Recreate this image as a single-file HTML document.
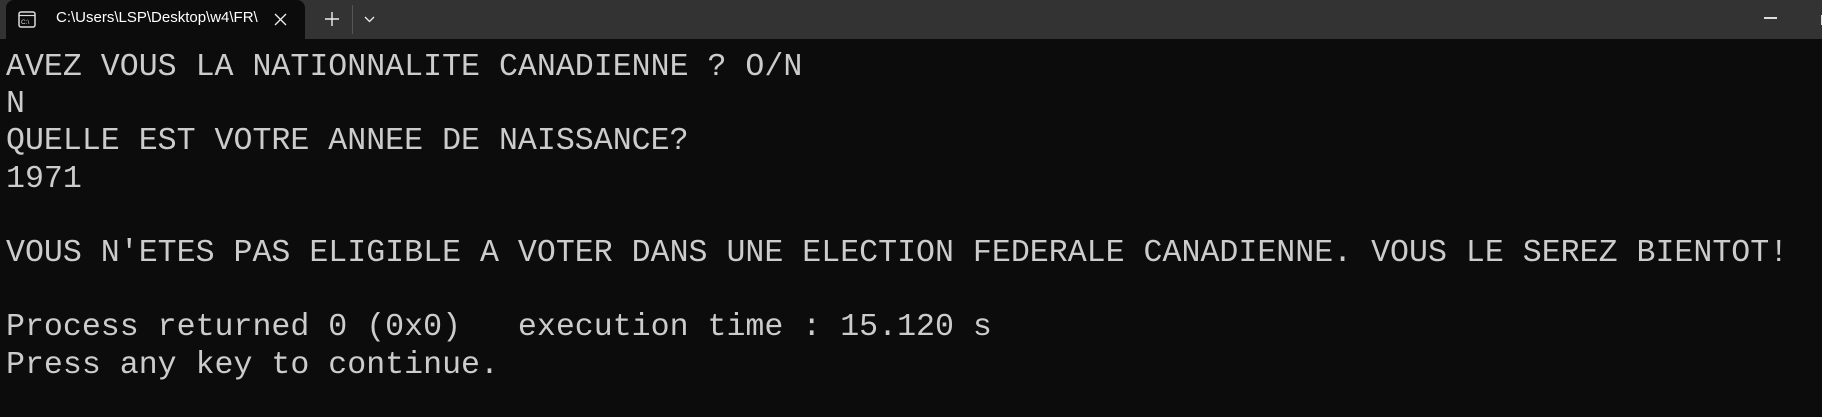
<!DOCTYPE html>
<html><head><meta charset="utf-8"><style>
html,body{margin:0;padding:0;width:1822px;height:417px;overflow:hidden;background:#0c0c0c;}
.bar{position:absolute;left:0;top:0;width:1822px;height:39px;background:#333;}
.tab{position:absolute;left:6px;top:0;width:299px;height:39px;background:#0c0c0c;border-radius:8px 8px 0 0;}
.ttl{position:absolute;left:50px;top:9px;font:15px "Liberation Sans",sans-serif;color:#fff;white-space:nowrap;width:208px;overflow:hidden;}
.term{position:absolute;left:6px;top:49px;font:31.6px/37.2px "Liberation Mono",monospace;color:#cccccc;white-space:pre;}
</style></head><body>
<div class="bar"></div>
<div class="tab">
<svg style="position:absolute;left:12px;top:11px" width="18" height="17" viewBox="0 0 18 17"><rect x="1" y="1" width="16" height="15" rx="2" fill="none" stroke="#ddd" stroke-width="1.5"/><line x1="1" y1="4.5" x2="17" y2="4.5" stroke="#ddd" stroke-width="1.2"/><text x="3" y="13" font-size="6.5" fill="#ddd" font-family="Liberation Sans">C:\</text></svg>
<div class="ttl">C:\Users\LSP\Desktop\w4\FR\</div>
<svg style="position:absolute;left:268px;top:13px" width="13" height="13"><path d="M1 1L12 12M12 1L1 12" stroke="#eee" stroke-width="1.3"/></svg>
</div>
<svg style="position:absolute;left:325px;top:12px" width="14" height="14"><path d="M7 0V14M0 7H14" stroke="#eee" stroke-width="1.4"/></svg>
<div style="position:absolute;left:352px;top:5px;width:1px;height:29px;background:#555"></div>
<svg style="position:absolute;left:364px;top:16px" width="11" height="7"><path d="M1 1L5.5 5.5L10 1" stroke="#eee" stroke-width="1.3" fill="none"/></svg>
<div style="position:absolute;left:1764px;top:17px;width:13px;height:1.5px;background:#ddd"></div>
<div style="position:absolute;left:1821px;top:15px;width:1px;height:10px;background:#ddd"></div>
<div class="term">AVEZ VOUS LA NATIONNALITE CANADIENNE ? O/N
N
QUELLE EST VOTRE ANNEE DE NAISSANCE?
1971

VOUS N'ETES PAS ELIGIBLE A VOTER DANS UNE ELECTION FEDERALE CANADIENNE. VOUS LE SEREZ BIENTOT!

Process returned 0 (0x0)   execution time : 15.120 s
Press any key to continue.</div>
</body></html>
